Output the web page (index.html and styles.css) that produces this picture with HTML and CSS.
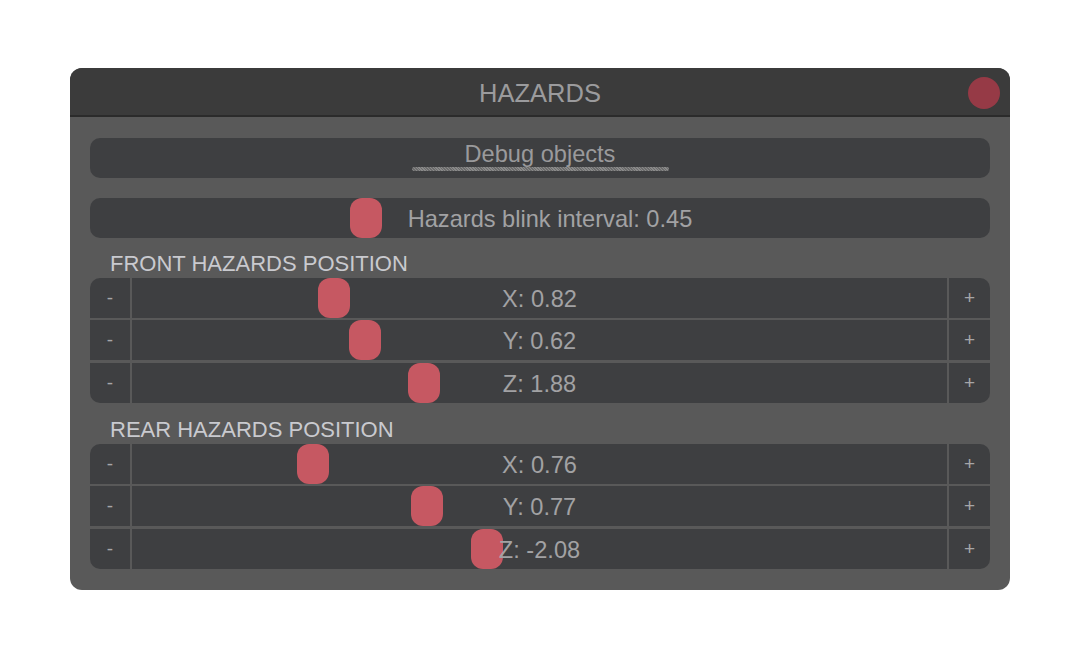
FILE: index.html
```html
<!DOCTYPE html>
<html>
<head>
<meta charset="utf-8">
<link rel="stylesheet" href="styles.css">
</head>
<body>
<div class="window">
  <div class="titlebar">
    <div></div>
    <div class="title">HAZARDS</div>
    <div class="close-wrap"><div class="close"></div></div>
  </div>
  <div class="content">
    <div class="button">
      <span class="btn-text">Debug objects</span>
      <span class="underline"></span>
    </div>
    <div class="slider single">
      <div class="thumb" style="left:260px"></div>
      <span class="value">Hazards blink interval: 0.45</span>
    </div>
    <div class="label">FRONT HAZARDS POSITION</div>
    <div class="group">
      <div class="row">
        <div class="step">-</div>
        <div class="track"><div class="thumb" style="left:186px"></div><span class="value">X: 0.82</span></div>
        <div class="step">+</div>
      </div>
      <div class="row">
        <div class="step">-</div>
        <div class="track"><div class="thumb" style="left:217px"></div><span class="value">Y: 0.62</span></div>
        <div class="step">+</div>
      </div>
      <div class="row">
        <div class="step">-</div>
        <div class="track"><div class="thumb" style="left:276px"></div><span class="value">Z: 1.88</span></div>
        <div class="step">+</div>
      </div>
    </div>
    <div class="label rear">REAR HAZARDS POSITION</div>
    <div class="group">
      <div class="row">
        <div class="step">-</div>
        <div class="track"><div class="thumb" style="left:165px"></div><span class="value">X: 0.76</span></div>
        <div class="step">+</div>
      </div>
      <div class="row">
        <div class="step">-</div>
        <div class="track"><div class="thumb" style="left:279px"></div><span class="value">Y: 0.77</span></div>
        <div class="step">+</div>
      </div>
      <div class="row">
        <div class="step">-</div>
        <div class="track"><div class="thumb" style="left:339px"></div><span class="value">Z: -2.08</span></div>
        <div class="step">+</div>
      </div>
    </div>
  </div>
</div>
</body>
</html>
```
FILE: styles.css
```css
* { box-sizing: border-box; }
html, body { margin: 0; padding: 0; background: #ffffff; }
body {
  font-family: "Liberation Sans", Arial, sans-serif;
  padding: 68px 70px 0 70px;
}
.window {
  width: 940px;
  background: #595959;
  border-radius: 12px;
  overflow: hidden;
}
.titlebar {
  height: 49px;
  background: #3b3b3b;
  border-bottom: 2px solid #2b2b2b;
  display: grid;
  grid-template-columns: 1fr auto 1fr;
  align-items: center;
}
.title {
  color: #9b9b9d;
  font-size: 25.5px;
  padding-top: 4px;
}
.close-wrap {
  display: flex;
  justify-content: flex-end;
  padding-right: 10px;
  padding-top: 3px;
}
.close {
  width: 32px;
  height: 32px;
  border-radius: 50%;
  background: #963a46;
}
.content {
  padding: 21px 20px 21px 20px;
  display: flex;
  flex-direction: column;
}
.button {
  height: 40px;
  border-radius: 10px;
  background: #3e3f41;
  display: flex;
  flex-direction: column;
  align-items: center;
  padding-top: 3px;
  margin-bottom: 20px;
}
.btn-text {
  color: #9a9a9c;
  font-size: 23.6px;
  line-height: 26px;
}
.underline {
  width: 257px;
  height: 4px;
  border-radius: 2px;
  margin-top: 0;
  background: repeating-linear-gradient(45deg, #6c6c6c 0 1px, #8a8a8a 1px 2px);
}
.slider {
  position: relative;
  height: 40px;
  border-radius: 10px;
  background: #3e3f41;
  display: flex;
  align-items: center;
  justify-content: center;
}
.single .value { padding-left: 20px; }
.thumb {
  position: absolute;
  top: 0;
  width: 32px;
  height: 40px;
  border-radius: 12px;
  background: #c65862;
}
.value {
  position: relative;
  color: #a2a2a4;
  font-size: 23.6px;
  padding-top: 2px;
}
.label {
  height: 40px;
  padding: 15px 0 0 20px;
  color: #c9cacf;
  font-size: 22px;
  line-height: 22px;
}
.label.rear { height: 41px; padding-top: 16px; }
.group {
  display: flex;
  flex-direction: column;
  gap: 2px;
  border-radius: 10px;
  overflow: hidden;
}
.row {
  display: flex;
  gap: 2px;
  height: 40px;
  flex: none;
}
.row:nth-child(2) { margin-bottom: 1px; }
.step {
  width: 40px;
  flex: none;
  background: #3e3f41;
  color: #a6a6a8;
  font-size: 19px;
  display: flex;
  align-items: center;
  justify-content: center;
}
.step:last-child { width: 41px; }
.track {
  flex: 1;
  position: relative;
  background: #3e3f41;
  display: flex;
  align-items: center;
  justify-content: center;
}
```
